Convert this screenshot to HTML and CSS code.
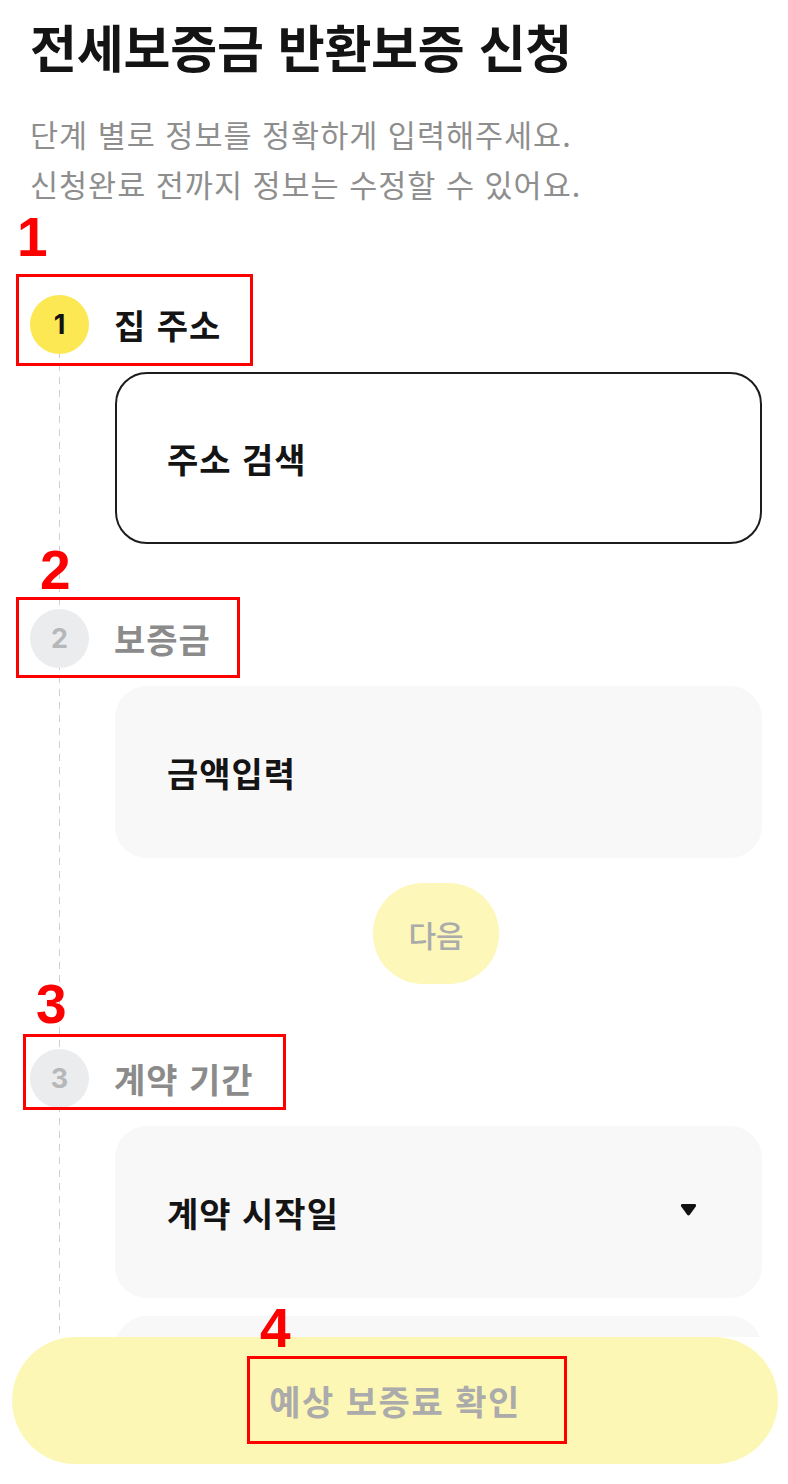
FILE: index.html
```html
<!DOCTYPE html>
<html lang="ko">
<head>
<meta charset="utf-8">
<title>전세보증금 반환보증 신청</title>
<link rel="stylesheet" href="styles.css">
</head>
<body>
<div class="page">
  <h1 class="title">전세보증금 반환보증 신청</h1>
  <p class="desc">단계 별로 정보를 정확하게 입력해주세요.<br>신청완료 전까지 정보는 수정할 수 있어요.</p>

  <div class="steps">
    <section class="step">
      <div class="step-head">
        <span class="badge badge-active">1</span>
        <span class="label label-active">집 주소</span>
      </div>
      <div class="field field-outlined">주소 검색</div>
    </section>

    <section class="step">
      <div class="step-head">
        <span class="badge">2</span>
        <span class="label">보증금</span>
      </div>
      <div class="field field-filled">금액입력</div>
      <div class="next-row"><button class="next-btn" type="button">다음</button></div>
    </section>

    <section class="step">
      <div class="step-head">
        <span class="badge">3</span>
        <span class="label">계약 기간</span>
      </div>
      <div class="field field-filled field-select">
        <span>계약 시작일</span>
        <svg class="caret" width="17" height="12" viewBox="0 0 17 12" aria-hidden="true"><path d="M1.2 2.4 Q0.2 0 2.6 0 H14.4 Q16.8 0 15.8 2.4 L9.8 10.8 Q8.5 12.4 7.2 10.8 Z" fill="#111"/></svg>
      </div>
      <div class="field field-filled field-more"></div>
    </section>
  </div>

  <footer class="footer">
    <button class="cta" type="button">예상 보증료 확인</button>
  </footer>

  <span class="mark mark-1">1</span>
  <span class="box box-1"></span>
  <span class="mark mark-2">2</span>
  <span class="box box-2"></span>
  <span class="mark mark-3">3</span>
  <span class="box box-3"></span>
  <span class="mark mark-4">4</span>
  <span class="box box-4"></span>
</div>
</body>
</html>
```

FILE: styles.css
```css
* { box-sizing: border-box; }

html, body {
  margin: 0;
  padding: 0;
  background: #ffffff;
}

body {
  font-family: "Noto Sans CJK KR", "Noto Sans", sans-serif;
  color: #111111;
}

.page {
  position: relative;
  width: 788px;
  padding-top: 16px;
  padding-bottom: 160px;
}

.title {
  margin: 0;
  padding-left: 30px;
  font-size: 51px;
  line-height: 60px;
  font-weight: 700;
  color: #141414;
  letter-spacing: -0.2px;
}

.desc {
  margin: 33px 0 0 0;
  padding-left: 30px;
  font-size: 30.5px;
  line-height: 50px;
  font-weight: 400;
  letter-spacing: 1px;
  color: #8e8e8e;
}

.steps {
  position: relative;
  margin-top: 86px;
}

.steps::before {
  content: "";
  position: absolute;
  left: 58.5px;
  top: 30px;
  bottom: 0;
  width: 1.6px;
  background: repeating-linear-gradient(to bottom, #cfcfd1 0 7px, transparent 7px 13px);
}

.step {
  padding-left: 30px;
  padding-right: 26px;
}

.step + .step {
  margin-top: 65px;
}

.step-head {
  display: flex;
  align-items: center;
  height: 59px;
  margin-bottom: 18px;
}

.badge {
  position: relative;
  display: flex;
  align-items: center;
  justify-content: center;
  width: 59px;
  height: 59px;
  border-radius: 50%;
  background: #ebecee;
  color: #b5b7b9;
  font-family: "Inter", "Noto Sans", sans-serif;
  font-size: 27px;
  font-weight: 700;
}

.badge-active {
  background: #fbe852;
  color: #111111;
}

.label {
  margin-left: 25px;
  font-size: 34px;
  letter-spacing: 1px;
  font-weight: 700;
  color: #8b8b8b;
}

.label-active {
  color: #141414;
}

.field {
  display: flex;
  align-items: center;
  margin-left: 85px;
  height: 172px;
  padding-left: 52px;
  border-radius: 32px;
  font-size: 34px;
  letter-spacing: 1px;
  font-weight: 700;
  color: #141414;
}

.field-outlined {
  border: 2px solid #1c1c1c;
  background: #ffffff;
  padding-left: 50px;
  height: 172px;
}

.field-filled {
  background: #f8f8f9;
}

.field-select {
  justify-content: space-between;
  padding-right: 65px;
}

.caret {
  display: block;
  margin-top: -4px;
}

.field-more {
  margin-top: 18px;
}

.next-row {
  display: flex;
  justify-content: center;
  margin-left: 85px;
  margin-top: 25px;
}

.next-btn {
  width: 126px;
  height: 101px;
  border: 0;
  border-radius: 50px;
  background: #fdf7b9;
  color: #ababab;
  font-family: "Noto Sans CJK KR", "Noto Sans", sans-serif;
  font-size: 30px;
  font-weight: 500;
  padding: 0;
  margin-left: -5px;
}

.footer {
  position: fixed;
  left: 0;
  right: 0;
  bottom: 0;
  height: 147px;
  padding: 0 10px 20px 12px;
  background: #ffffff;
  z-index: 5;
}

.cta {
  display: block;
  width: 100%;
  height: 127px;
  border: 0;
  border-radius: 64px;
  background: #fdf7b6;
  color: #ababab;
  font-family: "Noto Sans CJK KR", "Noto Sans", sans-serif;
  font-size: 34px;
  letter-spacing: 1.5px;
  font-weight: 700;
  padding: 0;
}

/* annotation overlay */
.mark {
  position: absolute;
  z-index: 10;
  font-family: "Liberation Sans", Arial, sans-serif;
  font-weight: 700;
  font-size: 55px;
  line-height: 55px;
  color: #ff0000;
}

.mark-1 { left: 17px; top: 210px; }
.mark-2 { left: 40px; top: 543px; }
.mark-3 { left: 36px; top: 977px; }
.mark-4 { left: 260px; top: 1301px; }

.box {
  position: absolute;
  z-index: 10;
  border: 3px solid #ff0000;
}

.box-1 { left: 16px; top: 274px; width: 237px; height: 92px; }
.box-2 { left: 16px; top: 597px; width: 224px; height: 81px; }
.box-3 { left: 23px; top: 1034px; width: 263px; height: 76px; }
.box-4 { left: 247px; top: 1356px; width: 320px; height: 88px; }
```
